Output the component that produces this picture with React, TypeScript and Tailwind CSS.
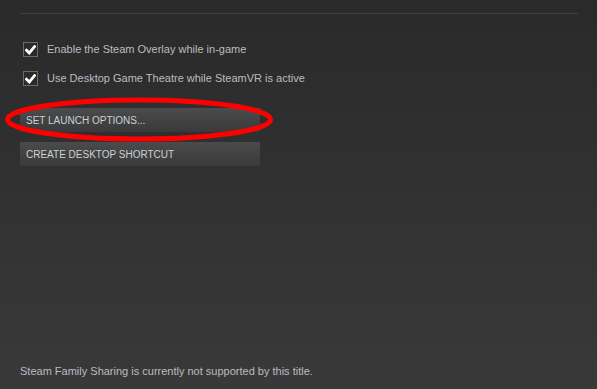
const CheckRow = ({ label }: { label: string }) => (
  <div className="flex items-center h-[15px]">
    <div className="w-[15px] h-[15px] border border-[#6b6b6b] bg-[#2a2a2a] flex items-center justify-center ml-[3px]">
      <svg width="11" height="10" viewBox="0 0 11 10">
        <path d="M1.5 5.2 L4.3 8 L9.6 1.6" fill="none" stroke="#ffffff" strokeWidth="2.8" strokeLinecap="square" strokeLinejoin="miter" />
      </svg>
    </div>
    <span className="ml-[9px] text-[11px] text-[#b9bdc1]">{label}</span>
  </div>
);

const SteamButton = ({ label }: { label: string }) => (
  <div className="w-[240px] h-[24px] flex items-center px-[6px] bg-gradient-to-b from-[#4b4b4b] to-[#3a3a3a] text-[10px] text-[#c9d1d8]">
    {label}
  </div>
);

export default function App() {
  return (
    <div
      className="relative w-[597px] h-[389px] overflow-hidden bg-gradient-to-b from-[#2a2a2a] to-[#393939] px-[20px] flex flex-col"
      style={{ fontFamily: '"Liberation Sans", Arial, sans-serif' }}
    >
      <div className="mt-[13px] h-px w-[558px] bg-[#3f3f3f]" />

      <div className="mt-[28px] flex flex-col gap-[14px]">
        <CheckRow label="Enable the Steam Overlay while in-game" />
        <CheckRow label="Use Desktop Game Theatre while SteamVR is active" />
      </div>

      <div className="mt-[22px] flex flex-col gap-[10px]">
        <SteamButton label="SET LAUNCH OPTIONS..." />
        <SteamButton label="CREATE DESKTOP SHORTCUT" />
      </div>

      <div className="mt-auto mb-[10px] text-[11px] text-[#b9bdc1]">
        Steam Family Sharing is currently not supported by this title.
      </div>

      <svg className="absolute left-[5px] top-[97px]" width="270" height="46" viewBox="0 0 270 46">
        <ellipse cx="134" cy="22.5" rx="131.5" ry="19.5" fill="none" stroke="#ff0000" strokeWidth="5" />
      </svg>
    </div>
  );
}
